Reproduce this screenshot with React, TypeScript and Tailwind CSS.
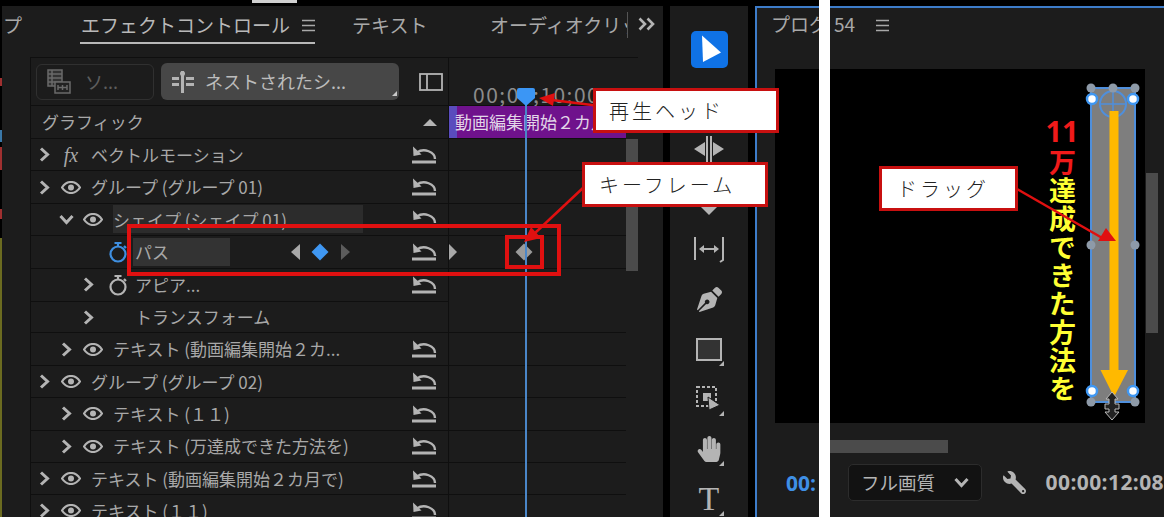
import React from "react";
import { FaPenNib, FaHandPaper, FaWrench } from "react-icons/fa";

const G = "#b4b4b4";

const Chevron = () => (
  <svg width="11" height="15" viewBox="0 0 11 15" fill="none" stroke={G} strokeWidth="3"><path d="M2 1.5 L8.5 7.5 L2 13.5" /></svg>
);
const ChevronDown = () => (
  <svg width="15" height="11" viewBox="0 0 15 11" fill="none" stroke={G} strokeWidth="3"><path d="M1.5 2 L7.5 8.5 L13.5 2" /></svg>
);
const Eye = () => (
  <svg width="20" height="13" viewBox="0 0 20 13" fill="none" stroke={G} strokeWidth="2.2">
    <path d="M1 6.5C4 2 7 1 10 1s6 1 9 5.5C16 11 13 12 10 12S4 11 1 6.5Z" />
    <circle cx="10" cy="6.5" r="3" fill={G} stroke="none" />
  </svg>
);
const Reset = () => (
  <svg width="26" height="18" viewBox="0 0 26 18">
    <path d="M24 13C24 6 13 1.5 6 6.5" fill="none" stroke={G} strokeWidth="2.4" />
    <path d="M2 0.5 L2.5 10 L10.5 8.5Z" fill={G} />
    <rect x="1" y="14.5" width="24" height="3" fill={G} />
  </svg>
);
const Stopwatch = ({ c }: { c: string }) => (
  <svg width="20" height="22" viewBox="0 0 20 22" fill="none" stroke={c} strokeWidth="2.2">
    <circle cx="10" cy="13" r="7.5" />
    <path d="M6.5 2 H13.5 M10 2 V5 M16 5 L18 7" />
  </svg>
);
const Menu = () => (
  <svg width="13" height="13" viewBox="0 0 13 13" stroke="#a8a8a8" strokeWidth="1.4"><path d="M0 1.5H13M0 6.5H13M0 11.5H13" /></svg>
);
const Flyout = () => (
  <span className="absolute right-[24px] bottom-[8px] w-0 h-0 border-l-[5px] border-l-transparent border-b-[5px] border-b-[#b4b4b4]" />
);

type RowProps = { level?: number; icon?: "eye" | "fx"; label: string };

const Row = ({ level = 0, icon = "eye", label }: RowProps) => (
  <div className="flex h-[32.4px] border-b border-[#0f0f0f]">
    <div className={level === 0 ? "w-[418px] flex items-center pl-[2px] border-r border-[#0f0f0f]" : "w-[418px] flex items-center pl-[24px] border-r border-[#0f0f0f]"}>
      <span className="w-[22px] flex justify-center"><Chevron /></span>
      <span className="w-[32px] flex justify-center">
        {icon === "eye" ? <Eye /> : <span className="font-['Liberation_Serif',serif] italic text-[20px] leading-none text-[#a8a8a8]">fx</span>}
      </span>
      <span className="ml-[4px] text-[17px] whitespace-nowrap text-[#a8a8a8]">{label}</span>
      <span className="ml-auto mr-[11px] flex"><Reset /></span>
    </div>
    <div className="flex-1" />
  </div>
);

const Tool = ({ children, flyout }: { children?: React.ReactNode; flyout?: boolean }) => (
  <div className="relative h-[50px] flex items-center justify-center">
    {children}
    {flyout && <Flyout />}
  </div>
);

function Callout({ left, top, width, text, pad }: { left: string; top: string; width: string; text: string; pad: string }) {
  return (
    <div className={`absolute ${left} ${top} ${width} h-[45px] bg-white border-[3px] border-[#c81010] flex items-center ${pad} text-[#222] text-[20px] font-light tracking-[3px] whitespace-nowrap`}>
      {text}
    </div>
  );
}

export default function App() {
  return (
    <div className="relative w-[1164px] h-[517px] overflow-hidden bg-black flex font-['Noto_Sans_CJK_JP','Noto_Sans',sans-serif] text-[#a8a8a8]">
      {/* left sliver */}
      <div className="w-[2px] flex flex-col shrink-0 pt-[78px]">
        <div className="h-[8px] bg-[#a03030]" />
        <div className="h-[46px]" />
        <div className="h-[12px] bg-[#3a78a8]" />
        <div className="h-[6px]" />
        <div className="h-[24px] bg-[#a03030]" />
        <div className="h-[40px]" />
        <div className="h-[10px] bg-[#a03030]" />
        <div className="h-[20px]" />
        <div className="h-[290px] bg-[#6b6b20]" />
      </div>

      {/* effect controls */}
      <div className="w-[661px] shrink-0 flex flex-col">
        <div className="h-[6px] bg-black"><div className="ml-[250px] w-[45px] h-[3px] bg-[#d0d0d0]" /></div>
        <div className="flex-1 bg-[#1c1c1c] overflow-hidden">
          <div className="h-[51px] flex items-start pt-[6px] text-[19px] leading-[26px] whitespace-nowrap">
            <div className="w-[78px] pl-[1px]">プ</div>
            <div className="w-[235px] h-[32px] flex items-start justify-between pl-[1px] border-b-2 border-[#b8b8b8] text-[#b8b8b8]">
              <span>エフェクトコントロール</span>
              <span className="mt-[7px]"><Menu /></span>
            </div>
            <div className="ml-[37px] w-[76px]">テキスト</div>
            <div className="ml-[62px] w-[137px] overflow-hidden">オーディオクリップミキサー</div>
            <div className="w-px h-[26px] bg-[#555]" />
            <div className="ml-[10px] mt-[5px]">
              <svg width="18" height="14" viewBox="0 0 18 14" fill="none" stroke={G} strokeWidth="2.6"><path d="M1.5 1.5 L7 7 L1.5 12.5 M9.5 1.5 L15 7 L9.5 12.5" /></svg>
            </div>
          </div>

          <div className="ml-[28px] w-[608px] border-l border-t border-[#0f0f0f]">
            {/* toolbar row */}
            <div className="flex h-[48px] border-b border-[#0f0f0f]">
              <div className="w-[418px] flex items-center border-r border-[#0f0f0f] pl-[5px] gap-[7px]">
                <div className="w-[118px] h-[36px] rounded-[6px] border border-[#303030] flex items-center pl-[10px] gap-[14px] text-[#5e5e5e] text-[18px]">
                  <svg width="24" height="26" viewBox="0 0 24 26" fill="none" stroke="#6a6a6a" strokeWidth="1.5">
                    <rect x="1" y="1" width="14" height="16" fill="#333" />
                    <path d="M1 5H15M1 9H15M1 13H15M5 1V17" />
                    <rect x="8" y="13" width="15" height="11" fill="#222" />
                    <path d="M11 18.5H20M11 16V21M15.5 16V21M20 16V21" />
                  </svg>
                  <span>ソ...</span>
                </div>
                <div className="relative w-[238px] h-[37px] rounded-[6px] bg-[#474747] flex items-center pl-[11px] gap-[11px] text-[18px] text-[#bcbcbc] whitespace-nowrap">
                  <svg width="22" height="22" viewBox="0 0 22 22" fill={G}>
                    <rect x="9" y="0" width="3" height="22" />
                    <circle cx="10.5" cy="2.5" r="2.5" />
                    <rect x="0" y="6" width="7" height="3" /><rect x="0" y="12" width="7" height="3" />
                    <rect x="14" y="6" width="8" height="3" /><rect x="14" y="12" width="8" height="3" />
                  </svg>
                  <span>ネストされたシ...</span>
                  <span className="absolute right-[2px] bottom-[4px] w-0 h-0 border-l-[5px] border-l-transparent border-b-[5px] border-b-[#c8c8c8]" />
                </div>
                <svg className="ml-[13px]" width="24" height="18" viewBox="0 0 24 18" fill="none" stroke={G} strokeWidth="1.8"><rect x="1" y="1" width="22" height="16" /><path d="M8 1V17" /></svg>
              </div>
              <div className="flex-1 pl-[24px] pt-[23px] text-[21px] leading-[26px] tracking-[1.5px] text-[#8c8c8c] whitespace-nowrap">00;00;10;00</div>
            </div>

            <div className="flex">
              <div className="w-[595px] shrink-0">
                {/* header row */}
                <div className="flex h-[33px] border-b border-[#0f0f0f]">
                  <div className="w-[418px] flex items-center justify-between pl-[11px] pr-[9px] border-r border-[#0f0f0f] text-[17px]">
                    <span>グラフィック</span>
                    <span className="mr-[2px] w-0 h-0 border-x-[7px] border-x-transparent border-b-[7px] border-b-[#b4b4b4]" />
                  </div>
                  <div className="flex-1 bg-[#6f128c] flex items-center overflow-hidden">
                    <span className="w-[8px] h-full bg-[#5a4cbd] shrink-0" />
                    <span className="text-[#e2d6e8] text-[17px] whitespace-nowrap -ml-[2px]">動画編集開始２カ月で</span>
                  </div>
                </div>
                <Row icon="fx" label="ベクトルモーション" />
                <Row label="グループ (グループ 01)" />
                {/* shape row */}
                <div className="flex h-[32.4px] border-b border-[#0f0f0f]">
                  <div className="w-[418px] flex items-center pl-[24px] border-r border-[#0f0f0f]">
                    <span className="w-[22px] flex justify-center"><ChevronDown /></span>
                    <span className="w-[32px] flex justify-center"><Eye /></span>
                    <span className="ml-[4px] w-[250px] h-[28px] bg-[#2c2c2c] flex items-center text-[17px] whitespace-nowrap">シェイプ (シェイプ 01)</span>
                    <span className="ml-auto mr-[11px] flex"><Reset /></span>
                  </div>
                </div>
                {/* path row */}
                <div className="flex h-[32.4px]">
                  <div className="w-[418px] flex items-center pl-[77px] border-r border-[#0f0f0f] border-b-[#0f0f0f] border-b">
                    <Stopwatch c="#3f8fe0" />
                    <span className="ml-[5px] w-[97px] h-[28px] pl-[2px] bg-[#333333] flex items-center text-[17px]">パス</span>
                    <span className="ml-[61px] w-0 h-0 border-y-[8px] border-y-transparent border-r-[9px] border-r-[#a8a8a8]" />
                    <span className="ml-[14px] w-[12px] h-[12px] rotate-45 bg-[#3f97f2]" />
                    <span className="ml-[15px] w-0 h-0 border-y-[8px] border-y-transparent border-l-[9px] border-l-[#5c5c5c]" />
                    <span className="ml-auto mr-[11px] flex"><Reset /></span>
                  </div>
                  <div className="flex-1 flex items-center border-b border-[#0f0f0f]">
                    <span className="w-0 h-0 border-y-[8px] border-y-transparent border-l-[8px] border-l-[#a8a8a8]" />
                    <span className="ml-[61px] w-[12px] h-[12px] rotate-45 bg-[#9a9a9a]" />
                  </div>
                </div>
                {/* appear row */}
                <div className="flex h-[32.4px]">
                  <div className="w-[418px] flex items-center pl-[46px] border-r border-[#0f0f0f]">
                    <span className="w-[22px] flex justify-center"><Chevron /></span>
                    <span className="ml-[9px]"><Stopwatch c={G} /></span>
                    <span className="ml-[7px] text-[17px]">アピア...</span>
                    <span className="ml-auto mr-[11px] flex"><Reset /></span>
                  </div>
                </div>
                {/* transform row */}
                <div className="flex h-[32.4px] border-b border-[#0f0f0f]">
                  <div className="w-[418px] flex items-center pl-[46px] border-r border-[#0f0f0f] border-t">
                    <span className="w-[22px] flex justify-center"><Chevron /></span>
                    <span className="ml-[36px] text-[17px]">トランスフォーム</span>
                  </div>
                </div>
                <Row level={1} label="テキスト (動画編集開始２カ..." />
                <Row label="グループ (グループ 02)" />
                <Row level={1} label="テキスト (１１)" />
                <Row level={1} label="テキスト (万達成できた方法を)" />
                <Row label="テキスト (動画編集開始２カ月で)" />
                <Row label="テキスト (１１)" />
              </div>
              <div className="w-[12px] pt-[33px]"><div className="h-[132px] bg-[#4b4b4b]" /></div>
            </div>
          </div>
        </div>
      </div>

      <div className="w-[7px] shrink-0" />

      {/* tools */}
      <div className="w-[78px] mt-[6px] shrink-0 bg-[#1c1c1c] pt-[18px]">
        <Tool>
          <div className="w-[37px] h-[37px] rounded-[5px] bg-[#0f72e6] flex items-center justify-center pl-[3px]">
            <svg width="24" height="30" viewBox="0 0 24 30"><path d="M3 1.5 L22 18.5 L4 28 Z" fill="#fff" /></svg>
          </div>
        </Tool>
        <Tool />
        <Tool>
          <svg width="32" height="32" viewBox="0 0 32 32" fill={G}>
            <path d="M1 16 L12 9 V23Z M31 16 L20 9 V23Z" /><rect x="13" y="3" width="2" height="26" /><rect x="17" y="3" width="2" height="26" />
          </svg>
        </Tool>
        <Tool>
          <svg width="32" height="32" viewBox="0 0 32 32" fill="#b4b4b4"><path d="M7 23 H25 L16 32Z" /></svg>
        </Tool>
        <Tool>
          <svg width="32" height="30" viewBox="0 0 32 30" fill="none" stroke={G} strokeWidth="2">
            <path d="M2 3V26M30 3V26L27 28" />
            <path d="M7 15H25" />
            <path d="M6 15 L11 11 V19Z M26 15 L21 11 V19Z" fill={G} stroke="none" />
          </svg>
        </Tool>
        <Tool><FaPenNib size={25} color={G} /></Tool>
        <Tool flyout>
          <div className="w-[26px] h-[23px] border-2 border-[#b4b4b4] bg-[#333]" />
        </Tool>
        <Tool flyout>
          <svg width="26" height="26" viewBox="0 0 26 26" fill="none">
            <rect x="1" y="1" width="19" height="19" stroke={G} strokeWidth="2" strokeDasharray="3 2" />
            <rect x="7" y="7" width="8" height="8" fill={G} />
            <path d="M12 11 L24 19 L13 24Z" fill={G} stroke="#1c1c1c" />
          </svg>
        </Tool>
        <Tool flyout><FaHandPaper size={26} color={G} /></Tool>
        <Tool flyout><span className="font-['Liberation_Serif',serif] text-[34px] leading-none text-[#b4b4b4]">T</span></Tool>
      </div>

      <div className="w-[7px] shrink-0" />

      {/* program monitor, left part */}
      <div className="w-[64px] mt-[6px] shrink-0 overflow-hidden bg-[#1c1c1c] border-l-2 border-t-2 border-[#3d7cc9]">
        <div className="h-[61px] pl-[14px] pt-[3px] text-[19px] leading-[26px] whitespace-nowrap">プログラム: シーケンス</div>
        <div className="ml-[18px] h-[354px] bg-black" />
        <div className="ml-[29px] mt-[47px] text-[21px] leading-[26px] font-bold text-[#3f8fe6] font-['Open_Sans',sans-serif]">00:</div>
      </div>

      <div className="w-[11px] shrink-0 bg-white" />

      {/* program monitor, right part */}
      <div className="flex-1 mt-[6px] bg-[#1c1c1c] border-t-2 border-[#3d7cc9] flex flex-col overflow-hidden">
        <div className="h-[61px] flex items-start pl-[4px] pt-[3px] text-[19px] leading-[26px]">
          <span>54</span>
          <span className="ml-[21px] mt-[8px]"><Menu /></span>
        </div>
        <div className="flex">
          <div className="relative w-[315px] h-[354px] bg-black">
            {/* title text */}
            <div className="absolute left-[214px] top-[46px] w-[36px] flex flex-col items-center font-bold">
              <span className="text-[#f01a1a] text-[29px] leading-[32px] font-['Noto_Sans',sans-serif]">11</span>
              <span className="mt-[2px] [writing-mode:vertical-rl] text-[27px] leading-[30px] tracking-[1.3px] text-[#ffff33] whitespace-nowrap"><span className="text-[#f01a1a]">万</span>達成できた方法を</span>
            </div>
            {/* shape on canvas */}
            <svg className="absolute left-[250px] top-[10px]" width="65" height="344" viewBox="0 0 65 344" fill="none">
              <rect x="11" y="9" width="44" height="314" fill="#7e7e7e" stroke="#4f8fdc" strokeWidth="2" />
              <circle cx="33" cy="25" r="13" stroke="#4f8fdc" strokeWidth="2" />
              <path d="M33 12V38M20 25H46" stroke="#4f8fdc" strokeWidth="1.5" />
              <rect x="29.5" y="32" width="9" height="262" fill="#ffb900" />
              <path d="M20.5 291 H48 L34 318Z" fill="#ffb900" />
              {[[11, 9], [33, 9], [55, 9], [11, 166], [55, 166], [11, 323], [55, 323]].map(([x, y]) => (
                <circle key={`${x}-${y}`} cx={x} cy={y} r="4.5" fill="#8e9aa8" />
              ))}
              {[[12, 20], [53, 20], [12, 312], [53, 312]].map(([x, y]) => (
                <circle key={`${x}-${y}`} cx={x} cy={y} r="5" fill="#fff" stroke="#3f97f2" strokeWidth="2.5" />
              ))}
              <path d="M32 313 L38 320 H35 V325 H39 V330 L35 330 V333 H39 L32 341 L25 333 H29 V330 H25 V325 H29 V320 H26Z" fill="#222" stroke="#bbb" strokeWidth="1" />
            </svg>
          </div>
          <div className="ml-[1px] mt-[104px] w-[12px] h-[160px] bg-[#4b4b4b]" />
        </div>
        <div className="mt-[17px] w-[118px] h-[13px] bg-[#4b4b4b]" />
        <div className="mt-[11px] flex items-center whitespace-nowrap">
          <div className="ml-[18px] w-[134px] h-[37px] rounded-[5px] bg-[#121212] border border-[#2c2c2c] flex items-center justify-between pl-[12px] pr-[12px] text-[18.5px] text-[#b4b4b4]">
            <span>フル画質</span>
            <ChevronDown />
          </div>
          <span className="ml-[21px] -scale-x-100"><FaWrench size={23} color={G} /></span>
          <span className="ml-[20px] text-[21px] font-bold tracking-[0.4px] text-[#b4b4b4] font-['Open_Sans',sans-serif]">00:00:12:08</span>
        </div>
      </div>

      {/* playhead over the effect controls */}
      <div className="absolute left-[525px] top-[105px] w-[2px] h-[412px] bg-[#4a86c8]" />
      <svg className="absolute left-[517px] top-[88px]" width="18" height="18" viewBox="0 0 18 18"><path d="M2 0H16a2 2 0 0 1 2 2V10L9 18L0 10V2a2 2 0 0 1 2-2Z" fill="#3b96f5" /></svg>

      {/* annotations */}
      <div className="absolute left-[127px] top-[224px] w-[434px] h-[52px] border-[4px] border-[#e01010]" />
      <div className="absolute left-[505px] top-[235px] w-[39px] h-[34px] border-[4px] border-[#e01010]" />
      <svg className="absolute left-0 top-0" width="1164" height="517" viewBox="0 0 1164 517" fill="none">
        <path d="M600 106 L552 100" stroke="#e01010" strokeWidth="2.5" />
        <path d="M539 98 L555 93 L553 106Z" fill="#e01010" />
        <path d="M584 187 L535 233" stroke="#e01010" strokeWidth="2.5" />
        <path d="M524 242 L531 227 L541 238Z" fill="#e01010" />
        <path d="M1017 189 L1104 239" stroke="#e01010" strokeWidth="2.5" />
        <path d="M1116 241 L1098 241 L1106 228Z" fill="#e01010" />
      </svg>
      <Callout left="left-[593px]" top="top-[88px]" width="w-[186px]" text="再生ヘッド" pad="pl-[13px]" />
      <Callout left="left-[582px]" top="top-[162px]" width="w-[186px]" text="キーフレーム" pad="pl-[14px]" />
      <Callout left="left-[879px]" top="top-[166px]" width="w-[139px]" text="ドラッグ" pad="pl-[15px]" />
    </div>
  );
}
